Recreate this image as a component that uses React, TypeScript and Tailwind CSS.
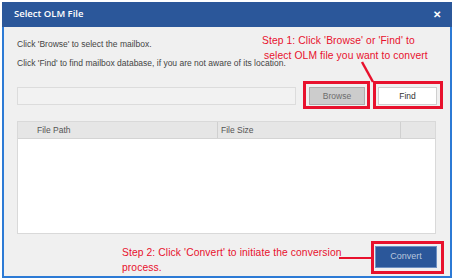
export default function App() {
  const ui = { fontFamily: '"Liberation Sans", Arial, sans-serif' };
  return (
    <div className="w-[455px] h-[280px] bg-white pl-[2px] pt-[2px]" style={ui}>
      <div className="w-[450px] h-[276px] border-2 border-[#2c7ad5] border-t-0 flex flex-col bg-[#f0f0f0] relative">
        {/* title bar */}
        <div className="h-[25px] -mx-[2px] bg-[#2b579a] flex items-center justify-between pl-[12px] pr-[11px] shrink-0">
          <span className="text-white text-[9.5px] font-semibold" style={{ fontFamily: '"Open Sans", sans-serif' }}>Select OLM File</span>
          <span className="text-white text-[10px] font-bold leading-none">✕</span>
        </div>

        {/* body */}
        <div className="flex-1 flex flex-col px-[13px] text-[#444]">
          <p className="text-[8.5px] leading-[10px] mt-[12px]">Click 'Browse' to select the mailbox.</p>
          <p className="text-[8.5px] leading-[10px] mt-[9px]">Click 'Find' to find mailbox database, if you are not aware of its location.</p>

          <div className="flex items-center gap-[13px] mt-[19px]">
            <div className="w-[279px] h-[18px] bg-[#f2f2f2] border border-[#dcdcdc]" />
            <button className="w-[56px] h-[18px] bg-[#cccccc] border border-[#adadad] text-[8.5px] text-[#6d6d6d]">Browse</button>
            <button className="w-[59px] h-[18px] bg-white border border-[#cfcfcf] text-[8.5px] text-[#333]">Find</button>
          </div>

          {/* list */}
          <div className="w-[419px] h-[113px] mt-[16px] bg-white border border-[#d9d9d9] flex flex-col">
            <div className="h-[17px] bg-[#e6e6e6] border-b border-[#d4d4d4] flex text-[8.5px] text-[#555]">
              <div className="w-[200px] flex items-center pl-[19px] border-r border-[#d0d0d0]">File Path</div>
              <div className="w-[183px] flex items-center pl-[3px] border-r border-[#d0d0d0]">File Size</div>
              <div className="flex-1" />
            </div>
          </div>

          <div className="flex justify-end mt-[12px]">
            <button className="w-[62px] h-[22px] bg-[#2b579a] border border-[#6d8fc2] text-[9px] text-[#b9c6dc]">Convert</button>
          </div>
        </div>

        {/* annotations */}
        <div className="absolute left-[258px] top-[31px] text-[#e8112d] text-[10.3px] leading-[15px] tracking-[0.1px]">
          <div>Step 1: Click 'Browse' or 'Find' to</div>
          <div className="pl-[2px]">select OLM file you want to convert</div>
        </div>
        <svg className="absolute left-0 top-0 pointer-events-none" width="450" height="276">
          <line x1="358" y1="60" x2="369" y2="80" stroke="#e8112d" strokeWidth="2.5" />
          <line x1="335" y1="256" x2="368" y2="256" stroke="#e8112d" strokeWidth="2" />
        </svg>
        <div className="absolute left-[299px] top-[79px] w-[67px] h-[28px] border-[3px] border-[#e8112d]" />
        <div className="absolute left-[369px] top-[79px] w-[70px] h-[28px] border-[3px] border-[#e8112d]" />
        <div className="absolute left-[367px] top-[239px] w-[73px] h-[33px] border-[3px] border-[#e8112d]" />
        <div className="absolute left-[118px] top-[243px] text-[#e8112d] text-[10.3px] leading-[15px] tracking-[0.1px]">
          <div>Step 2: Click 'Convert' to initiate the conversion</div>
          <div>process.</div>
        </div>
      </div>
    </div>
  );
}
